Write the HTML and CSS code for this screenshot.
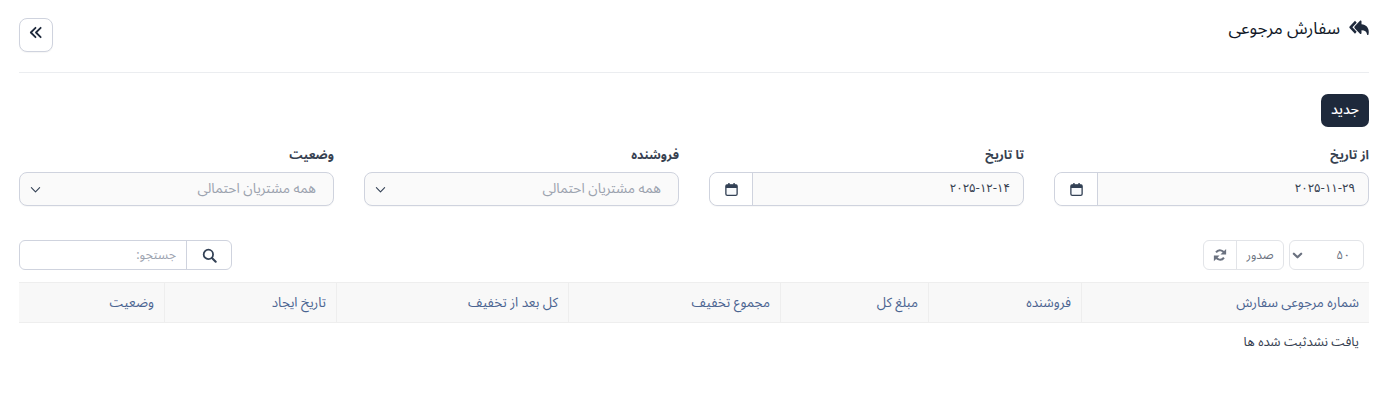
FILE: index.html
```
<!DOCTYPE html>
<html lang="fa" dir="rtl">
<head>
<meta charset="utf-8">
<title>سفارش مرجوعی</title>
<link rel="stylesheet" href="styles.css">
</head>
<body>
<main class="page">
  <header class="head">
    <h1 class="title">
      <svg class="title-icon" viewBox="0 0.600 20 13" preserveAspectRatio="none" aria-hidden="true"><path fill="#1e293b" d="M6 1.300 7.700 3 3.400 6.900 7.700 10.800 6 12.500.6 7.600c-.4-.4-.4-1 0-1.400z"/><path fill="#1e293b" transform="translate(1 0)" d="M10 1.200 4.700 6c-.5.500-.5 1.200 0 1.700l5.300 4.800c.6.500 1.500.1 1.500-.7V9.500c3.500 0 5 1 5.600 3.600.1.800 1 .9 1.300.2 1.400-4.700-1.300-8.700-6.900-9V1.900c0-.8-.9-1.200-1.500-.7z"/></svg>
      <span>سفارش مرجوعی</span>
    </h1>
    <button class="collapse" type="button" aria-label="بستن">
      <svg viewBox="0 0 16 16" width="15" height="15" aria-hidden="true"><path fill="none" stroke="#1e293b" stroke-width="1.900" stroke-linecap="round" stroke-linejoin="round" d="M8 3 3 8l5 5M13.500 3l-5 5 5 5"/></svg>
    </button>
  </header>

  <div class="actions"><button class="btn-new" type="button">جدید</button></div>

  <section class="filters">
    <div class="field">
      <label class="label">از تاریخ</label>
      <div class="date">
        <span class="date-value">۲۰۲۵-۱۱-۲۹</span>
        <span class="date-icon"><svg viewBox="0 0 16 16" width="15" height="15" aria-hidden="true"><rect x="2" y="3" width="12" height="11.200" rx="1.500" fill="#f8fafc" stroke="#334155" stroke-width="1.400"/><path fill="#334155" d="M2 3h12v3.500H2zM4.500 1h1.500v3H4.500zM10 1h1.500v3H10z"/></svg></span>
      </div>
    </div>
    <div class="field">
      <label class="label">تا تاریخ</label>
      <div class="date">
        <span class="date-value">۲۰۲۵-۱۲-۱۴</span>
        <span class="date-icon"><svg viewBox="0 0 16 16" width="15" height="15" aria-hidden="true"><rect x="2" y="3" width="12" height="11.200" rx="1.500" fill="#f8fafc" stroke="#334155" stroke-width="1.400"/><path fill="#334155" d="M2 3h12v3.500H2zM4.500 1h1.500v3H4.500zM10 1h1.500v3H10z"/></svg></span>
      </div>
    </div>
    <div class="field">
      <label class="label">فروشنده</label>
      <div class="select">
        <span class="placeholder">همه مشتریان احتمالی</span>
        <svg class="chev" viewBox="0 0 12 12" width="11" height="11" aria-hidden="true"><path fill="none" stroke="#334155" stroke-width="1.200" stroke-linecap="round" stroke-linejoin="round" d="M1.500 4 6 8.500 10.500 4"/></svg>
      </div>
    </div>
    <div class="field">
      <label class="label">وضعیت</label>
      <div class="select">
        <span class="placeholder">همه مشتریان احتمالی</span>
        <svg class="chev" viewBox="0 0 12 12" width="11" height="11" aria-hidden="true"><path fill="none" stroke="#334155" stroke-width="1.200" stroke-linecap="round" stroke-linejoin="round" d="M1.500 4 6 8.500 10.500 4"/></svg>
      </div>
    </div>
  </section>

  <section class="toolbar">
    <div class="tools">
      <div class="page-size">
        <span>۵۰</span>
        <svg viewBox="0 0 12 12" width="11" height="11" aria-hidden="true"><path fill="none" stroke="#6b7280" stroke-width="2.400" stroke-linecap="round" stroke-linejoin="round" d="M2 4l4 4 4-4"/></svg>
      </div>
      <div class="export">
        <span class="export-label">صدور</span>
        <span class="export-icon"><svg viewBox="0 0 16 16" width="14" height="14" aria-hidden="true"><path fill="none" stroke="#6b7280" stroke-width="2.300" d="M13 6.500A5.300 5.300 0 0 0 3.500 5M3 9.500A5.300 5.300 0 0 0 12.500 11"/><path fill="#6b7280" d="M15 1v6.500H8.500zM1 15V8.500h6.500z"/></svg></span>
      </div>
    </div>
    <div class="search">
      <span class="search-icon"><svg viewBox="0 0 16 16" width="15" height="15" aria-hidden="true"><circle cx="6.800" cy="6.800" r="5" fill="none" stroke="#334155" stroke-width="1.900"/><path stroke="#334155" stroke-width="2.200" stroke-linecap="round" d="m10.600 10.600 4 4"/></svg></span>
      <span class="search-input">جستجو:</span>
    </div>
  </section>

  <table class="grid">
    <colgroup>
      <col class="c1"><col class="c2"><col class="c3"><col class="c4"><col class="c5"><col class="c6"><col class="c7">
    </colgroup>
    <thead>
      <tr>
        <th>شماره مرجوعی سفارش</th>
        <th>فروشنده</th>
        <th>مبلغ کل</th>
        <th>مجموع تخفیف</th>
        <th>کل بعد از تخفیف</th>
        <th>تاریخ ایجاد</th>
        <th>وضعیت</th>
      </tr>
    </thead>
  </table>
  <p class="empty">یافت نشدثبت شده ها</p>
</main>
</body>
</html>
```
FILE: styles.css
```
* { box-sizing: border-box; }
html, body { margin: 0; padding: 0; background: #fff; }
body { font-family: "Noto Sans Arabic", Tahoma, sans-serif; color: #1e293b; font-size: 13px; height: 405px; overflow: hidden; }
.page { padding: 18px 20px 0 19px; }
.head { display: flex; justify-content: space-between; align-items: flex-start; height: 55px; border-bottom: 1px solid #ebedf0; }
.title { margin: -1px 0 0; display: flex; align-items: flex-start; gap: 9px; font-size: 17px; font-weight: 400; line-height: 24px; color: #111827; }
.title-icon { width: 20px; height: 15px; margin-top: 3px; }
.collapse { width: 34px; height: 34px; padding: 0 2px 5px 0; background: #fff; border: 1px solid #cfd3de; border-radius: 8px; display: flex; align-items: center; justify-content: center; box-shadow: 0 1px 1px rgba(0,0,0,.04); }
.actions { display: flex; padding-top: 21px; }
.btn-new { width: 48px; height: 33px; padding: 0 0 3px; background: #1e293b; color: #fff; border: 0; border-radius: 7px; font: 500 14px "Noto Sans Arabic", Tahoma, sans-serif; }
.filters { display: grid; grid-template-columns: repeat(4, 315px); column-gap: 30px; margin-top: 20px; }
.label { display: block; height: 25px; font-size: 12.500px; font-weight: 700; line-height: 16px; color: #374151; }
.date, .select { height: 34px; border: 1px solid #cfd3de; border-radius: 8px; display: flex; align-items: center; background: #fafafa; box-shadow: 0 1px 1px rgba(0,0,0,.03); }
.date-value { flex: 1; padding: 0 13px 2px 0; font-family: "DejaVu Sans", sans-serif; font-size: 12px; color: #374151; line-height: 30px; }
.date-icon { width: 43px; height: 32px; background: #fff; border-right: 1px solid #cfd3de; border-radius: 8px 0 0 8px; display: flex; align-items: center; justify-content: center; }
.select { justify-content: space-between; padding: 0 17px 2px 5px; }
.placeholder { color: #9ca3af; font-size: 13.750px; }
.chev { margin: 2px 0 0 5px; }
.toolbar { display: flex; justify-content: space-between; margin-top: 34px; height: 30px; padding-right: 5px; }
.tools { display: flex; gap: 5px; }
.page-size { width: 75px; height: 30px; border: 1px solid #e2e4e8; border-radius: 6px; display: flex; justify-content: space-between; align-items: center; padding: 0 13px 0 2px; color: #6b7280; font-size: 12px; }
.export { width: 81px; height: 30px; border: 1px solid #e2e4e8; border-radius: 6px; display: flex; align-items: center; color: #6b7280; font-size: 12px; }
.export-label { flex: 1; text-align: center; }
.export-icon { width: 33px; height: 28px; border-right: 1px solid #e2e4e8; display: flex; align-items: center; justify-content: center; }
.search { width: 213px; height: 30px; border: 1px solid #cfd3de; border-radius: 6px; display: flex; align-items: center; }
.search-input { flex: 1; padding-right: 10px; font-size: 12.500px; color: #9ca3af; border-right: 1px solid #cfd3de; line-height: 28px; }
.search-icon { width: 44px; height: 28px; display: flex; align-items: center; justify-content: center; }
.grid { width: 1350px; margin-top: 12px; border-collapse: separate; border-spacing: 0; table-layout: fixed; }
.c1 { width: 288px; } .c2 { width: 153px; } .c3 { width: 148px; } .c4 { width: 212px; } .c5 { width: 232px; } .c6 { width: 172px; } .c7 { width: 145px; }
.grid th { height: 41px; padding: 0 10px; background: #f8f8f8; border-top: 1px solid #eeeeee; border-bottom: 1px solid #eeeeee; border-left: 1px solid #eeeeee; text-align: right; font-size: 13.330px; font-weight: 400; color: #4b6491; }
.grid th:last-child { border-left: 0; }
.empty { margin: 10px 10px 0 0; font-size: 13px; line-height: 18px; color: #374151; }
```
